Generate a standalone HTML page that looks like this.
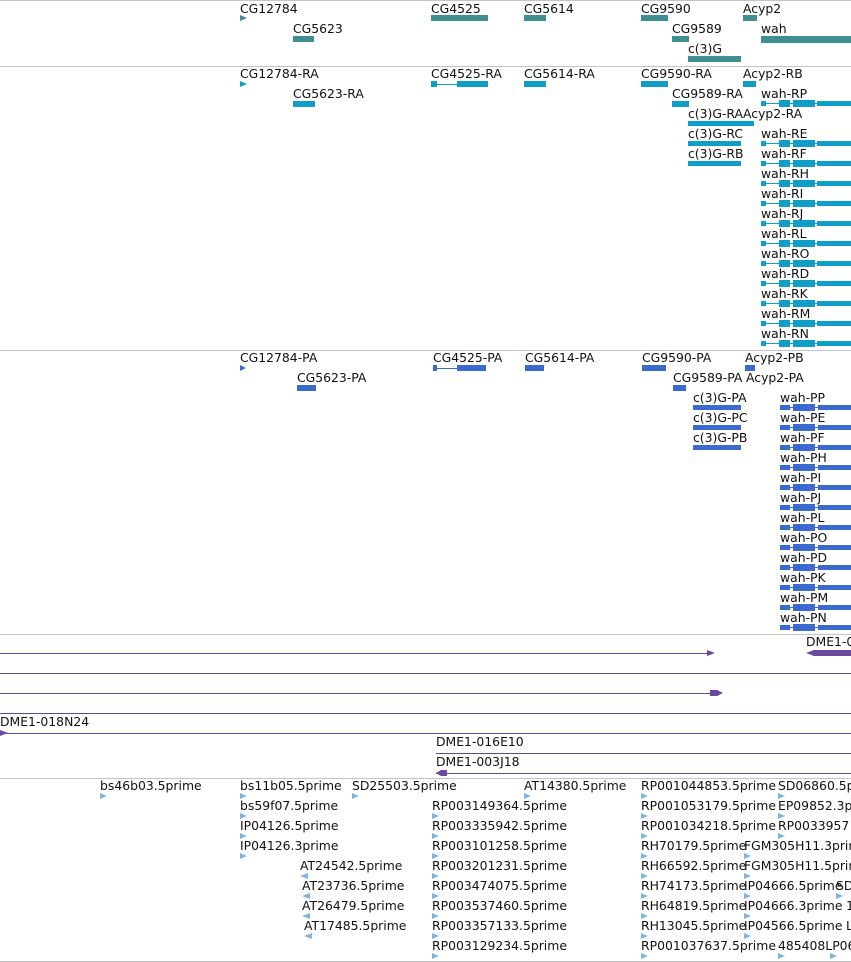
<!DOCTYPE html>
<html><head><meta charset="utf-8"><style>
body{margin:0;width:851px;height:962px;background:#fff;position:relative;overflow:hidden;font-family:"DejaVu Sans","Liberation Sans",sans-serif}
.t{position:absolute;font-size:12.4px;line-height:14px;white-space:nowrap;color:#111}
.s{position:absolute;left:0;width:851px;height:1px;background:#c4c4c4}
.b{position:absolute;height:6px}
.tr{position:absolute;width:0;height:0;border-top:3px solid transparent;border-bottom:3px solid transparent}
.g{background:#3f8e90}.c{background:#0e9ec6}.p{background:#3a6ad0}.e{background:#7fb3e3}
.l{position:absolute;height:1px;background:#5a4b92}
.w{position:absolute;height:7px;width:90px}
.w i{position:absolute;display:block}
</style></head><body>
<div class="s" style="top:0px"></div>
<div class="s" style="top:66px"></div>
<div class="s" style="top:350px"></div>
<div class="s" style="top:634px"></div>
<div class="s" style="top:778px"></div>
<div class="s" style="top:961px"></div>

<div class="t" style="left:240px;top:2px">CG12784</div>
<div class="t" style="left:431px;top:2px">CG4525</div>
<div class="t" style="left:524px;top:2px">CG5614</div>
<div class="t" style="left:641px;top:2px">CG9590</div>
<div class="t" style="left:743px;top:2px">Acyp2</div>
<div class="tr" style="left:240px;top:15px;border-left:7px solid #3f8e90"></div>
<div class="b g" style="left:431px;top:15px;width:57px"></div>
<div class="b g" style="left:524px;top:15px;width:22px"></div>
<div class="b g" style="left:641px;top:15px;width:27px"></div>
<div class="b g" style="left:743px;top:15px;width:14px"></div>
<div class="t" style="left:293px;top:22px">CG5623</div>
<div class="t" style="left:672px;top:22px">CG9589</div>
<div class="t" style="left:761px;top:22px">wah</div>
<div class="b g" style="left:293px;top:36px;width:21px"></div>
<div class="b g" style="left:672px;top:36px;width:17px"></div>
<div class="b g" style="left:761px;top:36px;width:90px;height:7px"></div>
<div class="t" style="left:688px;top:42px">c(3)G</div>
<div class="b g" style="left:688px;top:56px;width:53px"></div>

<div class="t" style="left:240px;top:67px">CG12784-RA</div>
<div class="t" style="left:431px;top:67px">CG4525-RA</div>
<div class="t" style="left:524px;top:67px">CG5614-RA</div>
<div class="t" style="left:641px;top:67px">CG9590-RA</div>
<div class="t" style="left:743px;top:67px">Acyp2-RB</div>
<div class="tr" style="left:240px;top:81px;border-left:7px solid #0e9ec6"></div>
<div class="b c" style="left:431px;top:84px;width:57px;height:1px"></div>
<div class="b c" style="left:431px;top:81px;width:6px"></div>
<div class="b c" style="left:457px;top:81px;width:31px"></div>
<div class="b c" style="left:524px;top:81px;width:22px"></div>
<div class="b c" style="left:641px;top:81px;width:27px"></div>
<div class="b c" style="left:743px;top:81px;width:13px"></div>
<div class="t" style="left:293px;top:87px">CG5623-RA</div>
<div class="t" style="left:672px;top:87px">CG9589-RA</div>
<div class="b c" style="left:293px;top:101px;width:22px"></div>
<div class="b c" style="left:672px;top:101px;width:17px"></div>
<div class="t" style="left:688px;top:107px">c(3)G-RA</div>
<div class="t" style="left:743px;top:107px">Acyp2-RA</div>
<div class="b c" style="left:688px;top:121px;width:66px;height:5px"></div>
<div class="t" style="left:688px;top:127px">c(3)G-RC</div>
<div class="b c" style="left:688px;top:141px;width:53px;height:5px"></div>
<div class="t" style="left:688px;top:147px">c(3)G-RB</div>
<div class="b c" style="left:688px;top:161px;width:53px;height:5px"></div>

<div class="t" style="left:761px;top:87px">wah-RP</div>
<div class="t" style="left:761px;top:127px">wah-RE</div>
<div class="t" style="left:761px;top:147px">wah-RF</div>
<div class="t" style="left:761px;top:167px">wah-RH</div>
<div class="t" style="left:761px;top:187px">wah-RI</div>
<div class="t" style="left:761px;top:207px">wah-RJ</div>
<div class="t" style="left:761px;top:227px">wah-RL</div>
<div class="t" style="left:761px;top:247px">wah-RO</div>
<div class="t" style="left:761px;top:267px">wah-RD</div>
<div class="t" style="left:761px;top:287px">wah-RK</div>
<div class="t" style="left:761px;top:307px">wah-RM</div>
<div class="t" style="left:761px;top:327px">wah-RN</div>
<div class="w" style="left:761px;top:100px"><i class="c" style="left:0;top:3px;width:90px;height:1px"></i><i class="c" style="left:0;top:1px;width:5px;height:5px"></i><i class="c" style="left:18px;top:0;width:11px;height:7px"></i><i class="c" style="left:32px;top:0;width:22px;height:7px"></i><i class="c" style="left:56px;top:1px;width:34px;height:5px"></i></div>
<div class="w" style="left:761px;top:140px"><i class="c" style="left:0;top:3px;width:90px;height:1px"></i><i class="c" style="left:0;top:1px;width:5px;height:5px"></i><i class="c" style="left:18px;top:0;width:11px;height:7px"></i><i class="c" style="left:32px;top:0;width:22px;height:7px"></i><i class="c" style="left:56px;top:1px;width:34px;height:5px"></i></div>
<div class="w" style="left:761px;top:160px"><i class="c" style="left:0;top:3px;width:90px;height:1px"></i><i class="c" style="left:0;top:1px;width:5px;height:5px"></i><i class="c" style="left:18px;top:0;width:11px;height:7px"></i><i class="c" style="left:32px;top:0;width:22px;height:7px"></i><i class="c" style="left:56px;top:1px;width:34px;height:5px"></i></div>
<div class="w" style="left:761px;top:180px"><i class="c" style="left:0;top:3px;width:90px;height:1px"></i><i class="c" style="left:0;top:1px;width:5px;height:5px"></i><i class="c" style="left:18px;top:0;width:11px;height:7px"></i><i class="c" style="left:32px;top:0;width:22px;height:7px"></i><i class="c" style="left:56px;top:1px;width:34px;height:5px"></i></div>
<div class="w" style="left:761px;top:200px"><i class="c" style="left:0;top:3px;width:90px;height:1px"></i><i class="c" style="left:0;top:1px;width:5px;height:5px"></i><i class="c" style="left:18px;top:0;width:11px;height:7px"></i><i class="c" style="left:32px;top:0;width:22px;height:7px"></i><i class="c" style="left:56px;top:1px;width:34px;height:5px"></i></div>
<div class="w" style="left:761px;top:220px"><i class="c" style="left:0;top:3px;width:90px;height:1px"></i><i class="c" style="left:0;top:1px;width:5px;height:5px"></i><i class="c" style="left:18px;top:0;width:11px;height:7px"></i><i class="c" style="left:32px;top:0;width:22px;height:7px"></i><i class="c" style="left:56px;top:1px;width:34px;height:5px"></i></div>
<div class="w" style="left:761px;top:240px"><i class="c" style="left:0;top:3px;width:90px;height:1px"></i><i class="c" style="left:0;top:1px;width:5px;height:5px"></i><i class="c" style="left:18px;top:0;width:11px;height:7px"></i><i class="c" style="left:32px;top:0;width:22px;height:7px"></i><i class="c" style="left:56px;top:1px;width:34px;height:5px"></i></div>
<div class="w" style="left:761px;top:260px"><i class="c" style="left:0;top:3px;width:90px;height:1px"></i><i class="c" style="left:0;top:1px;width:5px;height:5px"></i><i class="c" style="left:18px;top:0;width:11px;height:7px"></i><i class="c" style="left:32px;top:0;width:22px;height:7px"></i><i class="c" style="left:56px;top:1px;width:34px;height:5px"></i></div>
<div class="w" style="left:761px;top:280px"><i class="c" style="left:0;top:3px;width:90px;height:1px"></i><i class="c" style="left:0;top:1px;width:5px;height:5px"></i><i class="c" style="left:18px;top:0;width:11px;height:7px"></i><i class="c" style="left:32px;top:0;width:22px;height:7px"></i><i class="c" style="left:56px;top:1px;width:34px;height:5px"></i></div>
<div class="w" style="left:761px;top:300px"><i class="c" style="left:0;top:3px;width:90px;height:1px"></i><i class="c" style="left:0;top:1px;width:5px;height:5px"></i><i class="c" style="left:18px;top:0;width:11px;height:7px"></i><i class="c" style="left:32px;top:0;width:22px;height:7px"></i><i class="c" style="left:56px;top:1px;width:34px;height:5px"></i></div>
<div class="w" style="left:761px;top:320px"><i class="c" style="left:0;top:3px;width:90px;height:1px"></i><i class="c" style="left:0;top:1px;width:5px;height:5px"></i><i class="c" style="left:18px;top:0;width:11px;height:7px"></i><i class="c" style="left:32px;top:0;width:22px;height:7px"></i><i class="c" style="left:56px;top:1px;width:34px;height:5px"></i></div>
<div class="w" style="left:761px;top:340px"><i class="c" style="left:0;top:3px;width:90px;height:1px"></i><i class="c" style="left:0;top:1px;width:5px;height:5px"></i><i class="c" style="left:18px;top:0;width:11px;height:7px"></i><i class="c" style="left:32px;top:0;width:22px;height:7px"></i><i class="c" style="left:56px;top:1px;width:34px;height:5px"></i></div>

<div class="t" style="left:240px;top:351px">CG12784-PA</div>
<div class="t" style="left:433px;top:351px">CG4525-PA</div>
<div class="t" style="left:525px;top:351px">CG5614-PA</div>
<div class="t" style="left:642px;top:351px">CG9590-PA</div>
<div class="t" style="left:745px;top:351px">Acyp2-PB</div>
<div class="tr" style="left:240px;top:365px;border-left:6px solid #3a6ad0"></div>
<div class="b p" style="left:433px;top:368px;width:53px;height:1px"></div>
<div class="b p" style="left:433px;top:365px;width:4px"></div>
<div class="b p" style="left:457px;top:365px;width:29px"></div>
<div class="b p" style="left:525px;top:365px;width:19px"></div>
<div class="b p" style="left:642px;top:365px;width:24px"></div>
<div class="b p" style="left:745px;top:365px;width:10px"></div>
<div class="t" style="left:297px;top:371px">CG5623-PA</div>
<div class="t" style="left:673px;top:371px">CG9589-PA</div>
<div class="t" style="left:746px;top:371px">Acyp2-PA</div>
<div class="b p" style="left:297px;top:385px;width:19px"></div>
<div class="b p" style="left:673px;top:385px;width:13px"></div>
<div class="t" style="left:693px;top:391px">c(3)G-PA</div>
<div class="t" style="left:693px;top:411px">c(3)G-PC</div>
<div class="t" style="left:693px;top:431px">c(3)G-PB</div>
<div class="b p" style="left:693px;top:405px;width:48px;height:5px"></div>
<div class="b p" style="left:693px;top:425px;width:48px;height:5px"></div>
<div class="b p" style="left:693px;top:445px;width:48px;height:5px"></div>
<div class="t" style="left:780px;top:391px">wah-PP</div>
<div class="t" style="left:780px;top:411px">wah-PE</div>
<div class="t" style="left:780px;top:431px">wah-PF</div>
<div class="t" style="left:780px;top:451px">wah-PH</div>
<div class="t" style="left:780px;top:471px">wah-PI</div>
<div class="t" style="left:780px;top:491px">wah-PJ</div>
<div class="t" style="left:780px;top:511px">wah-PL</div>
<div class="t" style="left:780px;top:531px">wah-PO</div>
<div class="t" style="left:780px;top:551px">wah-PD</div>
<div class="t" style="left:780px;top:571px">wah-PK</div>
<div class="t" style="left:780px;top:591px">wah-PM</div>
<div class="t" style="left:780px;top:611px">wah-PN</div>
<div class="w" style="left:780px;top:404px"><i class="p" style="left:0;top:3px;width:71px;height:1px"></i><i class="p" style="left:0;top:1px;width:10px;height:5px"></i><i class="p" style="left:13px;top:0;width:22px;height:7px"></i><i class="p" style="left:38px;top:1px;width:33px;height:5px"></i></div>
<div class="w" style="left:780px;top:424px"><i class="p" style="left:0;top:3px;width:71px;height:1px"></i><i class="p" style="left:0;top:1px;width:10px;height:5px"></i><i class="p" style="left:13px;top:0;width:22px;height:7px"></i><i class="p" style="left:38px;top:1px;width:33px;height:5px"></i></div>
<div class="w" style="left:780px;top:444px"><i class="p" style="left:0;top:3px;width:71px;height:1px"></i><i class="p" style="left:0;top:1px;width:10px;height:5px"></i><i class="p" style="left:13px;top:0;width:22px;height:7px"></i><i class="p" style="left:38px;top:1px;width:33px;height:5px"></i></div>
<div class="w" style="left:780px;top:464px"><i class="p" style="left:0;top:3px;width:71px;height:1px"></i><i class="p" style="left:0;top:1px;width:10px;height:5px"></i><i class="p" style="left:13px;top:0;width:22px;height:7px"></i><i class="p" style="left:38px;top:1px;width:33px;height:5px"></i></div>
<div class="w" style="left:780px;top:484px"><i class="p" style="left:0;top:3px;width:71px;height:1px"></i><i class="p" style="left:0;top:1px;width:10px;height:5px"></i><i class="p" style="left:13px;top:0;width:22px;height:7px"></i><i class="p" style="left:38px;top:1px;width:33px;height:5px"></i></div>
<div class="w" style="left:780px;top:504px"><i class="p" style="left:0;top:3px;width:71px;height:1px"></i><i class="p" style="left:0;top:1px;width:10px;height:5px"></i><i class="p" style="left:13px;top:0;width:22px;height:7px"></i><i class="p" style="left:38px;top:1px;width:33px;height:5px"></i></div>
<div class="w" style="left:780px;top:524px"><i class="p" style="left:0;top:3px;width:71px;height:1px"></i><i class="p" style="left:0;top:1px;width:10px;height:5px"></i><i class="p" style="left:13px;top:0;width:22px;height:7px"></i><i class="p" style="left:38px;top:1px;width:33px;height:5px"></i></div>
<div class="w" style="left:780px;top:544px"><i class="p" style="left:0;top:3px;width:71px;height:1px"></i><i class="p" style="left:0;top:1px;width:10px;height:5px"></i><i class="p" style="left:13px;top:0;width:22px;height:7px"></i><i class="p" style="left:38px;top:1px;width:33px;height:5px"></i></div>
<div class="w" style="left:780px;top:564px"><i class="p" style="left:0;top:3px;width:71px;height:1px"></i><i class="p" style="left:0;top:1px;width:10px;height:5px"></i><i class="p" style="left:13px;top:0;width:22px;height:7px"></i><i class="p" style="left:38px;top:1px;width:33px;height:5px"></i></div>
<div class="w" style="left:780px;top:584px"><i class="p" style="left:0;top:3px;width:71px;height:1px"></i><i class="p" style="left:0;top:1px;width:10px;height:5px"></i><i class="p" style="left:13px;top:0;width:22px;height:7px"></i><i class="p" style="left:38px;top:1px;width:33px;height:5px"></i></div>
<div class="w" style="left:780px;top:604px"><i class="p" style="left:0;top:3px;width:71px;height:1px"></i><i class="p" style="left:0;top:1px;width:10px;height:5px"></i><i class="p" style="left:13px;top:0;width:22px;height:7px"></i><i class="p" style="left:38px;top:1px;width:33px;height:5px"></i></div>
<div class="w" style="left:780px;top:624px"><i class="p" style="left:0;top:3px;width:71px;height:1px"></i><i class="p" style="left:0;top:1px;width:10px;height:5px"></i><i class="p" style="left:13px;top:0;width:22px;height:7px"></i><i class="p" style="left:38px;top:1px;width:33px;height:5px"></i></div>

<div class="t" style="left:806px;top:635px">DME1-0</div>
<div class="tr" style="left:806px;top:650px;border-right:8px solid #6a4aa0"></div>
<div class="b" style="left:813px;top:650px;width:38px;background:#6a4aa0"></div>
<div class="l" style="left:0;top:653px;width:710px"></div>
<div class="tr" style="left:707px;top:650px;border-left:8px solid #6a4aa0"></div>
<div class="l" style="left:0;top:673px;width:851px"></div>
<div class="l" style="left:0;top:693px;width:712px"></div>
<div class="b" style="left:710px;top:690px;width:8px;background:#6a4aa0"></div>
<div class="tr" style="left:717px;top:690px;border-left:6px solid #6a4aa0"></div>
<div class="l" style="left:0;top:713px;width:851px"></div>
<div class="t" style="left:0;top:715px">DME1-018N24</div>
<div class="l" style="left:0;top:733px;width:851px"></div>
<div class="tr" style="left:0;top:730px;border-left:8px solid #6a4aa0"></div>
<div class="t" style="left:436px;top:735px">DME1-016E10</div>
<div class="l" style="left:436px;top:753px;width:415px"></div>
<div class="t" style="left:436px;top:755px">DME1-003J18</div>
<div class="l" style="left:436px;top:773px;width:415px"></div>
<div class="tr" style="left:436px;top:770px;border-right:5px solid #6a4aa0"></div>
<div class="b" style="left:441px;top:770px;width:6px;background:#6a4aa0"></div>

<div class="t" style="left:100px;top:779px">bs46b03.5prime</div>
<div class="t" style="left:240px;top:779px">bs11b05.5prime</div>
<div class="t" style="left:352px;top:779px">SD25503.5prime</div>
<div class="t" style="left:524px;top:779px">AT14380.5prime</div>
<div class="t" style="left:641px;top:779px">RP001044853.5prime</div>
<div class="t" style="left:778px;top:779px">SD06860.5prime</div>
<div class="t" style="left:240px;top:799px">bs59f07.5prime</div>
<div class="t" style="left:432px;top:799px">RP003149364.5prime</div>
<div class="t" style="left:641px;top:799px">RP001053179.5prime</div>
<div class="t" style="left:778px;top:799px">EP09852.3prime</div>
<div class="t" style="left:240px;top:819px">IP04126.5prime</div>
<div class="t" style="left:432px;top:819px">RP003335942.5prime</div>
<div class="t" style="left:641px;top:819px">RP001034218.5prime</div>
<div class="t" style="left:778px;top:819px">RP0033957</div>
<div class="t" style="left:240px;top:839px">IP04126.3prime</div>
<div class="t" style="left:432px;top:839px">RP003101258.5prime</div>
<div class="t" style="left:641px;top:839px">RH70179.5prime</div>
<div class="t" style="left:744px;top:839px">FGM305H11.3prime</div>
<div class="t" style="left:300px;top:859px">AT24542.5prime</div>
<div class="t" style="left:432px;top:859px">RP003201231.5prime</div>
<div class="t" style="left:641px;top:859px">RH66592.5prime</div>
<div class="t" style="left:744px;top:859px">FGM305H11.5prime</div>
<div class="t" style="left:302px;top:879px">AT23736.5prime</div>
<div class="t" style="left:432px;top:879px">RP003474075.5prime</div>
<div class="t" style="left:641px;top:879px">RH74173.5prime</div>
<div class="t" style="left:744px;top:879px">IP04666.5prime</div>
<div class="t" style="left:836px;top:879px">SD</div>
<div class="t" style="left:302px;top:899px">AT26479.5prime</div>
<div class="t" style="left:432px;top:899px">RP003537460.5prime</div>
<div class="t" style="left:641px;top:899px">RH64819.5prime</div>
<div class="t" style="left:744px;top:899px">IP04666.3prime</div>
<div class="t" style="left:846px;top:899px">1</div>
<div class="t" style="left:304px;top:919px">AT17485.5prime</div>
<div class="t" style="left:432px;top:919px">RP003357133.5prime</div>
<div class="t" style="left:641px;top:919px">RH13045.5prime</div>
<div class="t" style="left:744px;top:919px">IP04566.5prime</div>
<div class="t" style="left:846px;top:919px">L</div>
<div class="t" style="left:432px;top:939px">RP003129234.5prime</div>
<div class="t" style="left:641px;top:939px">RP001037637.5prime</div>
<div class="t" style="left:778px;top:939px">485408LP06</div>

<div class="tr" style="left:100px;top:793px;border-left:7px solid #7fb3e3"></div>
<div class="tr" style="left:240px;top:793px;border-left:7px solid #7fb3e3"></div>
<div class="tr" style="left:352px;top:793px;border-left:7px solid #7fb3e3"></div>
<div class="tr" style="left:524px;top:793px;border-left:7px solid #7fb3e3"></div>
<div class="tr" style="left:641px;top:793px;border-left:7px solid #7fb3e3"></div>
<div class="tr" style="left:778px;top:793px;border-left:7px solid #7fb3e3"></div>
<div class="tr" style="left:240px;top:813px;border-left:7px solid #7fb3e3"></div>
<div class="tr" style="left:432px;top:813px;border-left:7px solid #7fb3e3"></div>
<div class="tr" style="left:641px;top:813px;border-left:7px solid #7fb3e3"></div>
<div class="tr" style="left:778px;top:813px;border-left:7px solid #7fb3e3"></div>
<div class="tr" style="left:240px;top:833px;border-left:7px solid #7fb3e3"></div>
<div class="tr" style="left:432px;top:833px;border-left:7px solid #7fb3e3"></div>
<div class="tr" style="left:641px;top:833px;border-left:7px solid #7fb3e3"></div>
<div class="tr" style="left:778px;top:833px;border-left:7px solid #7fb3e3"></div>
<div class="tr" style="left:240px;top:853px;border-left:7px solid #7fb3e3"></div>
<div class="tr" style="left:432px;top:853px;border-left:7px solid #7fb3e3"></div>
<div class="tr" style="left:641px;top:853px;border-left:7px solid #7fb3e3"></div>
<div class="tr" style="left:744px;top:853px;border-left:7px solid #7fb3e3"></div>
<div class="tr" style="left:300px;top:873px;border-right:8px solid #7fb3e3"></div>
<div class="tr" style="left:432px;top:873px;border-left:7px solid #7fb3e3"></div>
<div class="tr" style="left:641px;top:873px;border-left:7px solid #7fb3e3"></div>
<div class="tr" style="left:744px;top:873px;border-left:7px solid #7fb3e3"></div>
<div class="tr" style="left:302px;top:893px;border-right:8px solid #7fb3e3"></div>
<div class="tr" style="left:432px;top:893px;border-left:7px solid #7fb3e3"></div>
<div class="tr" style="left:641px;top:893px;border-left:7px solid #7fb3e3"></div>
<div class="tr" style="left:744px;top:893px;border-left:7px solid #7fb3e3"></div>
<div class="tr" style="left:836px;top:893px;border-left:7px solid #7fb3e3"></div>
<div class="tr" style="left:302px;top:913px;border-right:8px solid #7fb3e3"></div>
<div class="tr" style="left:432px;top:913px;border-left:7px solid #7fb3e3"></div>
<div class="tr" style="left:641px;top:913px;border-left:7px solid #7fb3e3"></div>
<div class="tr" style="left:744px;top:913px;border-left:7px solid #7fb3e3"></div>
<div class="tr" style="left:304px;top:933px;border-right:8px solid #7fb3e3"></div>
<div class="tr" style="left:432px;top:933px;border-left:7px solid #7fb3e3"></div>
<div class="tr" style="left:641px;top:933px;border-left:7px solid #7fb3e3"></div>
<div class="tr" style="left:744px;top:933px;border-left:7px solid #7fb3e3"></div>
<div class="tr" style="left:432px;top:953px;border-left:7px solid #7fb3e3"></div>
<div class="tr" style="left:641px;top:953px;border-left:7px solid #7fb3e3"></div>
<div class="tr" style="left:778px;top:953px;border-left:7px solid #7fb3e3"></div>
<div class="tr" style="left:830px;top:953px;border-left:7px solid #7fb3e3"></div>
</body></html>
